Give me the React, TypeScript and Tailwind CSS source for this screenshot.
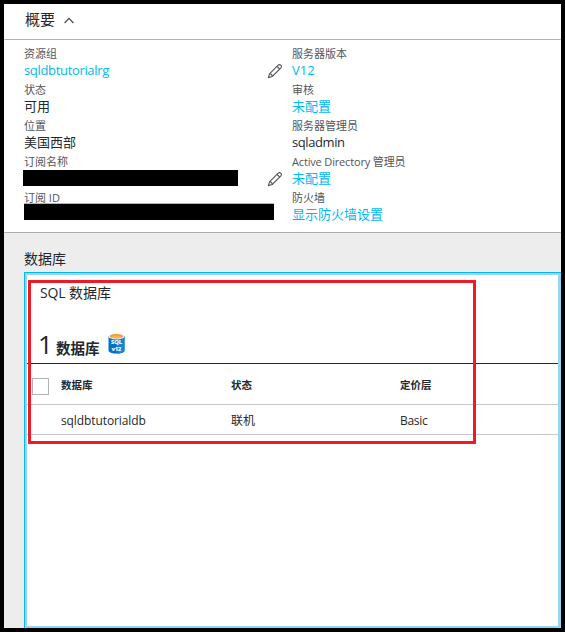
import type { ReactNode } from "react";

type FieldProps = {
  label: string;
  value?: string;
  link?: boolean;
  valueClass?: string;
  labelClass?: string;
  redaction?: ReactNode;
  editable?: boolean;
};

function Pencil() {
  return (
    <svg className="mt-4 h-4 w-4 shrink-0" viewBox="0 0 16 16" fill="none" stroke="#53565c" strokeWidth="1.1" strokeLinejoin="round">
      <path d="M1.4 14.6 2.5 10.8 10.9 2.3Q12.5.9 14 2.3 15.2 3.8 13.7 5.2L5.2 13.5Z" />
      <path d="M2.5 10.8Q5 10.8 5.2 13.5M10 3.3 12.7 6" />
    </svg>
  );
}

function Field({ label, value, link, valueClass = "", labelClass = "", redaction, editable }: FieldProps) {
  return (
    <div className="flex h-9 justify-between">
      <div className="flex flex-col">
        <span className={`h-4 shrink-0 text-[11px] leading-[14px] text-[#53565c] ${labelClass}`}>{label}</span>
        {redaction ?? (
          <span className={`-mt-0.5 h-[18px] text-[13px] leading-[18px] ${link ? "text-[#00b9f2]" : "text-[#25282e]"} ${valueClass}`}>{value}</span>
        )}
      </div>
      {editable && <Pencil />}
    </div>
  );
}

function SqlIcon() {
  return (
    <svg className="mb-0.5 ml-2 h-[21px] w-[17px]" viewBox="0 0 17 21">
      <path d="M.5 3.3V17.5C.5 19.4 4 20.6 8.5 20.6s8-1.2 8-3.1V3.3Z" fill="#0072c6" />
      <path d="M8.5 3.3h8v14.2c0 1.9-3.5 3.1-8 3.1Z" fill="#1683d3" />
      <ellipse cx="8.5" cy="3.4" rx="8" ry="3" fill="#e8edf1" />
      <ellipse cx="8.5" cy="3.3" rx="6.7" ry="2.2" fill="#f59b32" />
      <ellipse cx="8.5" cy="3.9" rx="4.8" ry="1.2" fill="#ffb34d" />
      <text x="8.5" y="11.3" textAnchor="middle" fontSize="5" fontWeight="700" fill="white" stroke="white" strokeWidth=".15" textLength="11" lengthAdjust="spacingAndGlyphs">SQL</text>
      <text x="8.5" y="18.3" textAnchor="middle" fontSize="5" fontWeight="700" fill="white" stroke="white" strokeWidth=".15" textLength="9.5" lengthAdjust="spacingAndGlyphs">v12</text>
    </svg>
  );
}

export default function App() {
  return (
    <div className="flex h-[632px] w-[565px] flex-col overflow-hidden border-4 border-black bg-white font-['Open_Sans','Noto_Sans_CJK_SC',sans-serif] whitespace-nowrap text-[#25282e]">
      <header className="flex h-9 shrink-0 items-center border-b border-[#b3b3b3] pb-1 pl-[21px]">
        <h1 className="-mt-0.5 text-[15px] leading-5">概要</h1>
        <svg className="mt-0.5 ml-[9px] h-[7px] w-[10px]" viewBox="0 0 10 7" fill="none" stroke="#44474d" strokeWidth="1.2">
          <path d="m.6 6 4.4-4.6L9.4 6" />
        </svg>
      </header>

      <section className="flex h-[193px] shrink-0 border-b border-[#adadad] pt-[7px] pl-5">
        <div className="w-[268px] pr-[9px]">
          <Field label="资源组" value="sqldbtutorialrg" link valueClass="text-[12.5px] tracking-[-0.33px]" editable />
          <Field label="状态" value="可用" />
          <Field label="位置" value="美国西部" />
          <Field
            label="订阅名称"
            editable
            redaction={<span className="-mt-px -ml-px h-4 w-[215px] shrink-0 bg-black" />}
          />
          <Field
            label="订阅 ID"
            redaction={<span className="-mt-1 h-[17px] w-[250px] shrink-0 border-t border-[#b5b5b5] bg-black" />}
          />
        </div>
        <div>
          <Field label="服务器版本" value="V12" link valueClass="text-[12.5px]" />
          <Field label="审核" value="未配置" link />
          <Field label="服务器管理员" value="sqladmin" valueClass="text-[12.5px] tracking-[-0.4px]" />
          <Field label="Active Directory 管理员" value="未配置" link labelClass="tracking-[-0.16px]" />
          <Field label="防火墙" value="显示防火墙设置" link />
        </div>
      </section>

      <section className="flex min-h-0 flex-1 flex-col bg-[#ededed] pl-5">
        <h2 className="h-[39px] pt-4 text-[14px] leading-5">数据库</h2>
        <div className="flex min-h-0 flex-1 border-t border-l border-[#00b9f2]">
          <div className="relative min-h-0 flex-1 border-t-2 border-r-[3px] border-b-2 border-l-2 border-[#99d5f2] bg-white">
            <div className="flex h-[89px] flex-col border-b border-[#25282e] pl-[13px]">
              <h3 className="pt-2 text-[14px] leading-5 tracking-[-0.1px]">SQL 数据库</h3>
              <div className="mt-[27px] flex h-7 items-center">
                <span className="-ml-0.5 w-[18px] text-[26px] leading-7 font-medium">1</span>
                <span className="mt-2.5 text-[14.5px] leading-5 font-bold">数据库</span>
                <SqlIcon />
              </div>
            </div>
            <div className="flex h-[41px] items-center border-b border-[#c8c8c8] text-[10.5px] font-bold">
              <span className="mt-1 ml-[5px] h-[17px] w-[17px] border border-[#b3b3b3] bg-white" />
              <span className="mt-1 ml-3 w-[170px]">数据库</span>
              <span className="mt-1 w-[169px]">状态</span>
              <span className="mt-1">定价层</span>
            </div>
            <div className="flex h-[30px] items-center border-b border-[#c8c8c8] pt-0.5 pl-[34px] text-[12px]">
              <span className="w-[170px] tracking-[-0.1px]">sqldbtutorialdb</span>
              <span className="w-[169px]">联机</span>
              <span className="text-[12px] tracking-[-0.3px]">Basic</span>
            </div>
            <div className="pointer-events-none absolute top-[5px] left-px h-[164px] w-[448px] border-[3px] border-[#ed1c24]" />
          </div>
        </div>
      </section>
    </div>
  );
}
